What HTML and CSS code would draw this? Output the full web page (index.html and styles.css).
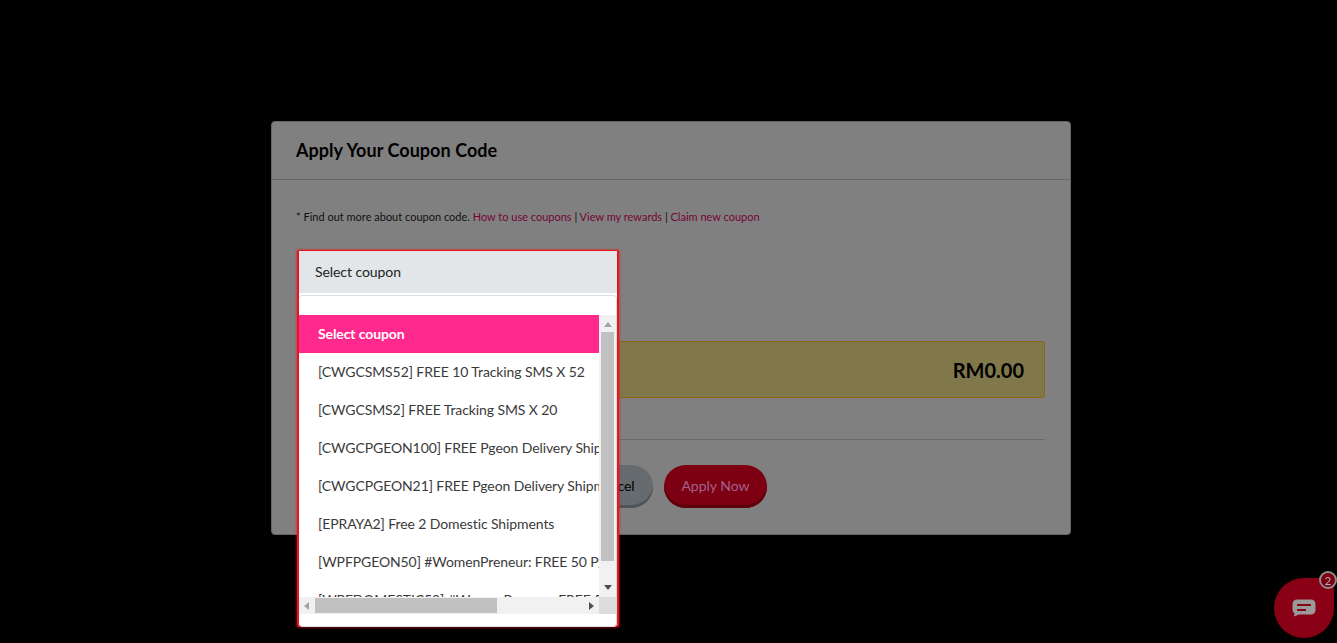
FILE: index.html
```html
<!DOCTYPE html>
<html lang="en">
<head>
    <meta charset="UTF-8">
    <meta name="viewport" content="width=device-width, initial-scale=1.0">
    <title>Apply Coupon</title>
    <link rel="stylesheet" href="styles.css">
</head>
<body>

<div class="modal">
    <div class="modal-header">
        <h2>Apply Your Coupon Code</h2>
    </div>
    <div class="modal-body">
        <p class="note">* Find out more about coupon code. <a href="#">How to use coupons</a> | <a href="#">View my rewards</a> | <a href="#">Claim new coupon</a></p>

        <div class="total-box">
            <span>RM0.00</span>
        </div>

        <div class="modal-footer">
            <button class="btn btn-cancel">Cancel</button>
            <button class="btn btn-apply">Apply Now</button>
        </div>
    </div>

    <!-- Open coupon dropdown -->
    <div class="dropdown">
        <div class="dropdown-selected">Select coupon</div>
        <div class="dropdown-panel">
            <div class="dropdown-scroll">
                <ul class="option-list">
                    <li class="active">Select coupon</li>
                    <li>[CWGCSMS52] FREE 10 Tracking SMS X 52</li>
                    <li>[CWGCSMS2] FREE Tracking SMS X 20</li>
                    <li>[CWGCPGEON100] FREE Pgeon Delivery Shipments</li>
                    <li>[CWGCPGEON21] FREE Pgeon Delivery Shipments</li>
                    <li>[EPRAYA2] Free 2 Domestic Shipments</li>
                    <li>[WPFPGEON50] #WomenPreneur: FREE 50 Pgeon</li>
                    <li>[WPFDOMESTIC50] #WomenPreneur: FREE 50 Domestic</li>
                </ul>
                <div class="vbar">
                    <span class="arrow arrow-up"></span>
                    <span class="vthumb"></span>
                    <span class="arrow arrow-down"></span>
                </div>
                <div class="hbar">
                    <span class="arrow arrow-left"></span>
                    <span class="hthumb"></span>
                    <span class="arrow arrow-right"></span>
                </div>
                <div class="corner"></div>
            </div>
        </div>
    </div>
</div>

<!-- Chat widget -->
<div class="chat">
    <svg width="24" height="18" viewBox="0 0 24 18">
        <path d="M5 0.5h14a4.5 4.5 0 0 1 4.5 4.5v6a4.5 4.5 0 0 1-4.5 4.5h-12l-5 2 0.5-3.2a4.5 4.5 0 0 1-2-3.3v-6a4.5 4.5 0 0 1 4.5-4.5z" fill="#9a9a9a"/>
        <rect x="5" y="5" width="14" height="2" fill="#8a0014"/>
        <rect x="5" y="10" width="9" height="2" fill="#8a0014"/>
    </svg>
    <span class="chat-badge">2</span>
</div>

</body>
</html>
```

FILE: styles.css
```css
html, body {
    height: 100%;
}
body {
    font-family: Lato, "Open Sans", sans-serif;
    margin: 0;
    padding: 0;
    background-color: #000;
    overflow: hidden;
    color: #000;
}
.modal {
    position: relative;
    box-sizing: border-box;
    width: 800px;
    height: 414px;
    margin: 121px 0 0 271px;
    background-color: #808080;
    border: 1px solid #666;
    border-radius: 4px;
}
.modal-header {
    box-sizing: border-box;
    height: 58px;
    padding: 0 24px 2px;
    display: flex;
    align-items: center;
    border-bottom: 1px solid #666;
}
.modal-header h2 {
    margin: 0;
    font-size: 18px;
    font-weight: 700;
    letter-spacing: 0.05px;
}
.modal-body {
    padding: 29px 25px 0 24px;
}
.note {
    margin: 0;
    font-size: 11px;
    line-height: 15px;
    color: #111;
}
.note a {
    color: #750535;
    text-decoration: none;
}
.total-box {
    box-sizing: border-box;
    height: 57px;
    margin: 117px 0 0 6px;
    padding: 0 20px;
    display: flex;
    align-items: center;
    justify-content: flex-end;
    background-color: #80774b;
    border: 1px solid #8f650e;
    border-radius: 3px;
    font-size: 20px;
    font-weight: 700;
}
.modal-footer {
    margin: 41px 0 0 6px;
    padding: 25px 0 0 273px;
    border-top: 1px solid #6a6a6a;
    display: flex;
    justify-content: flex-start;
    gap: 11px;
}
.btn {
    height: 43px;
    padding: 0 0 2px;
    border: none;
    border-radius: 22px;
    font-family: inherit;
    font-size: 14px;
    white-space: nowrap;
}
.btn-cancel {
    width: 78px;
    background-color: #666b6f;
    box-shadow: inset 0 -3px 0 #505356;
    color: #000;
}
.btn-apply {
    width: 103px;
    background-color: #7c0012;
    box-shadow: inset 0 -3px 0 #5c000c;
    color: #a4608a;
}
.dropdown {
    position: absolute;
    left: 25px;
    top: 128px;
    box-sizing: border-box;
    width: 322px;
    height: 377px;
    background-color: #fff;
    border: 1px solid #e8141e;
    border-left-width: 2px;
    border-right-width: 2px;
    border-bottom-width: 2px;
    border-radius: 2px;
    box-shadow: 0 0 3px #e8141e;
}
.dropdown-selected {
    height: 42px;
    padding: 0 0 2px 16px;
    box-sizing: border-box;
    display: flex;
    align-items: center;
    background-color: #e2e6e9;
    font-size: 14px;
    letter-spacing: -0.07px;
    color: #222;
}
.dropdown-panel {
    box-sizing: border-box;
    height: 332px;
    margin-top: 2px;
    padding-top: 19px;
    border: 1px solid #ddd;
    border-left: none;
    border-radius: 4px;
    background-color: #fff;
}
.dropdown-scroll {
    height: 299px;
    display: grid;
    grid-template-columns: 300px 17px;
    grid-template-rows: 282px 17px;
}
.option-list {
    margin: 0;
    padding: 0;
    list-style: none;
    overflow: hidden;
    font-size: 14px;
    letter-spacing: -0.1px;
    color: #3a3a3a;
}
.option-list li {
    height: 38px;
    line-height: 38px;
    padding-left: 19px;
    white-space: nowrap;
}
.option-list li.active {
    background-color: #ff288c;
    color: #fff;
    font-weight: 700;
}
.vbar {
    display: flex;
    flex-direction: column;
    align-items: center;
    background-color: #f1f1f1;
}
.vthumb {
    width: 13px;
    height: 229px;
    margin: 0 0 auto;
    background-color: #c1c1c1;
}
.hbar {
    display: flex;
    align-items: center;
    background-color: #f1f1f1;
}
.hthumb {
    width: 182px;
    height: 15px;
    margin-right: auto;
    background-color: #c1c1c1;
}
.corner {
    background-color: #dcdcdc;
}
.arrow {
    flex: none;
    width: 0;
    height: 0;
    border: 4px solid transparent;
}
.arrow-up {
    margin: 7px 0 5px;
    border-top: none;
    border-bottom: 5px solid #a3a3a3;
}
.arrow-down {
    margin: 0 0 7px;
    border-bottom: none;
    border-top: 5px solid #505050;
}
.arrow-left {
    margin: 0 6px 0 5px;
    border-left: none;
    border-right: 5px solid #a3a3a3;
}
.arrow-right {
    margin: 0 5px 0 0;
    border-right: none;
    border-left: 5px solid #505050;
}
.chat {
    position: fixed;
    left: 1274px;
    top: 578px;
    width: 60px;
    height: 60px;
    display: flex;
    align-items: center;
    justify-content: center;
    background-color: #8a0014;
    border-radius: 50% 8px 50% 50%;
}
.chat-badge {
    position: absolute;
    left: 45px;
    top: -7px;
    box-sizing: border-box;
    width: 18px;
    height: 18px;
    display: flex;
    align-items: center;
    justify-content: center;
    background-color: #7c0012;
    border: 2px solid #8c8c8c;
    border-radius: 50%;
    font-size: 11px;
    color: #b8b8b8;
}
```
